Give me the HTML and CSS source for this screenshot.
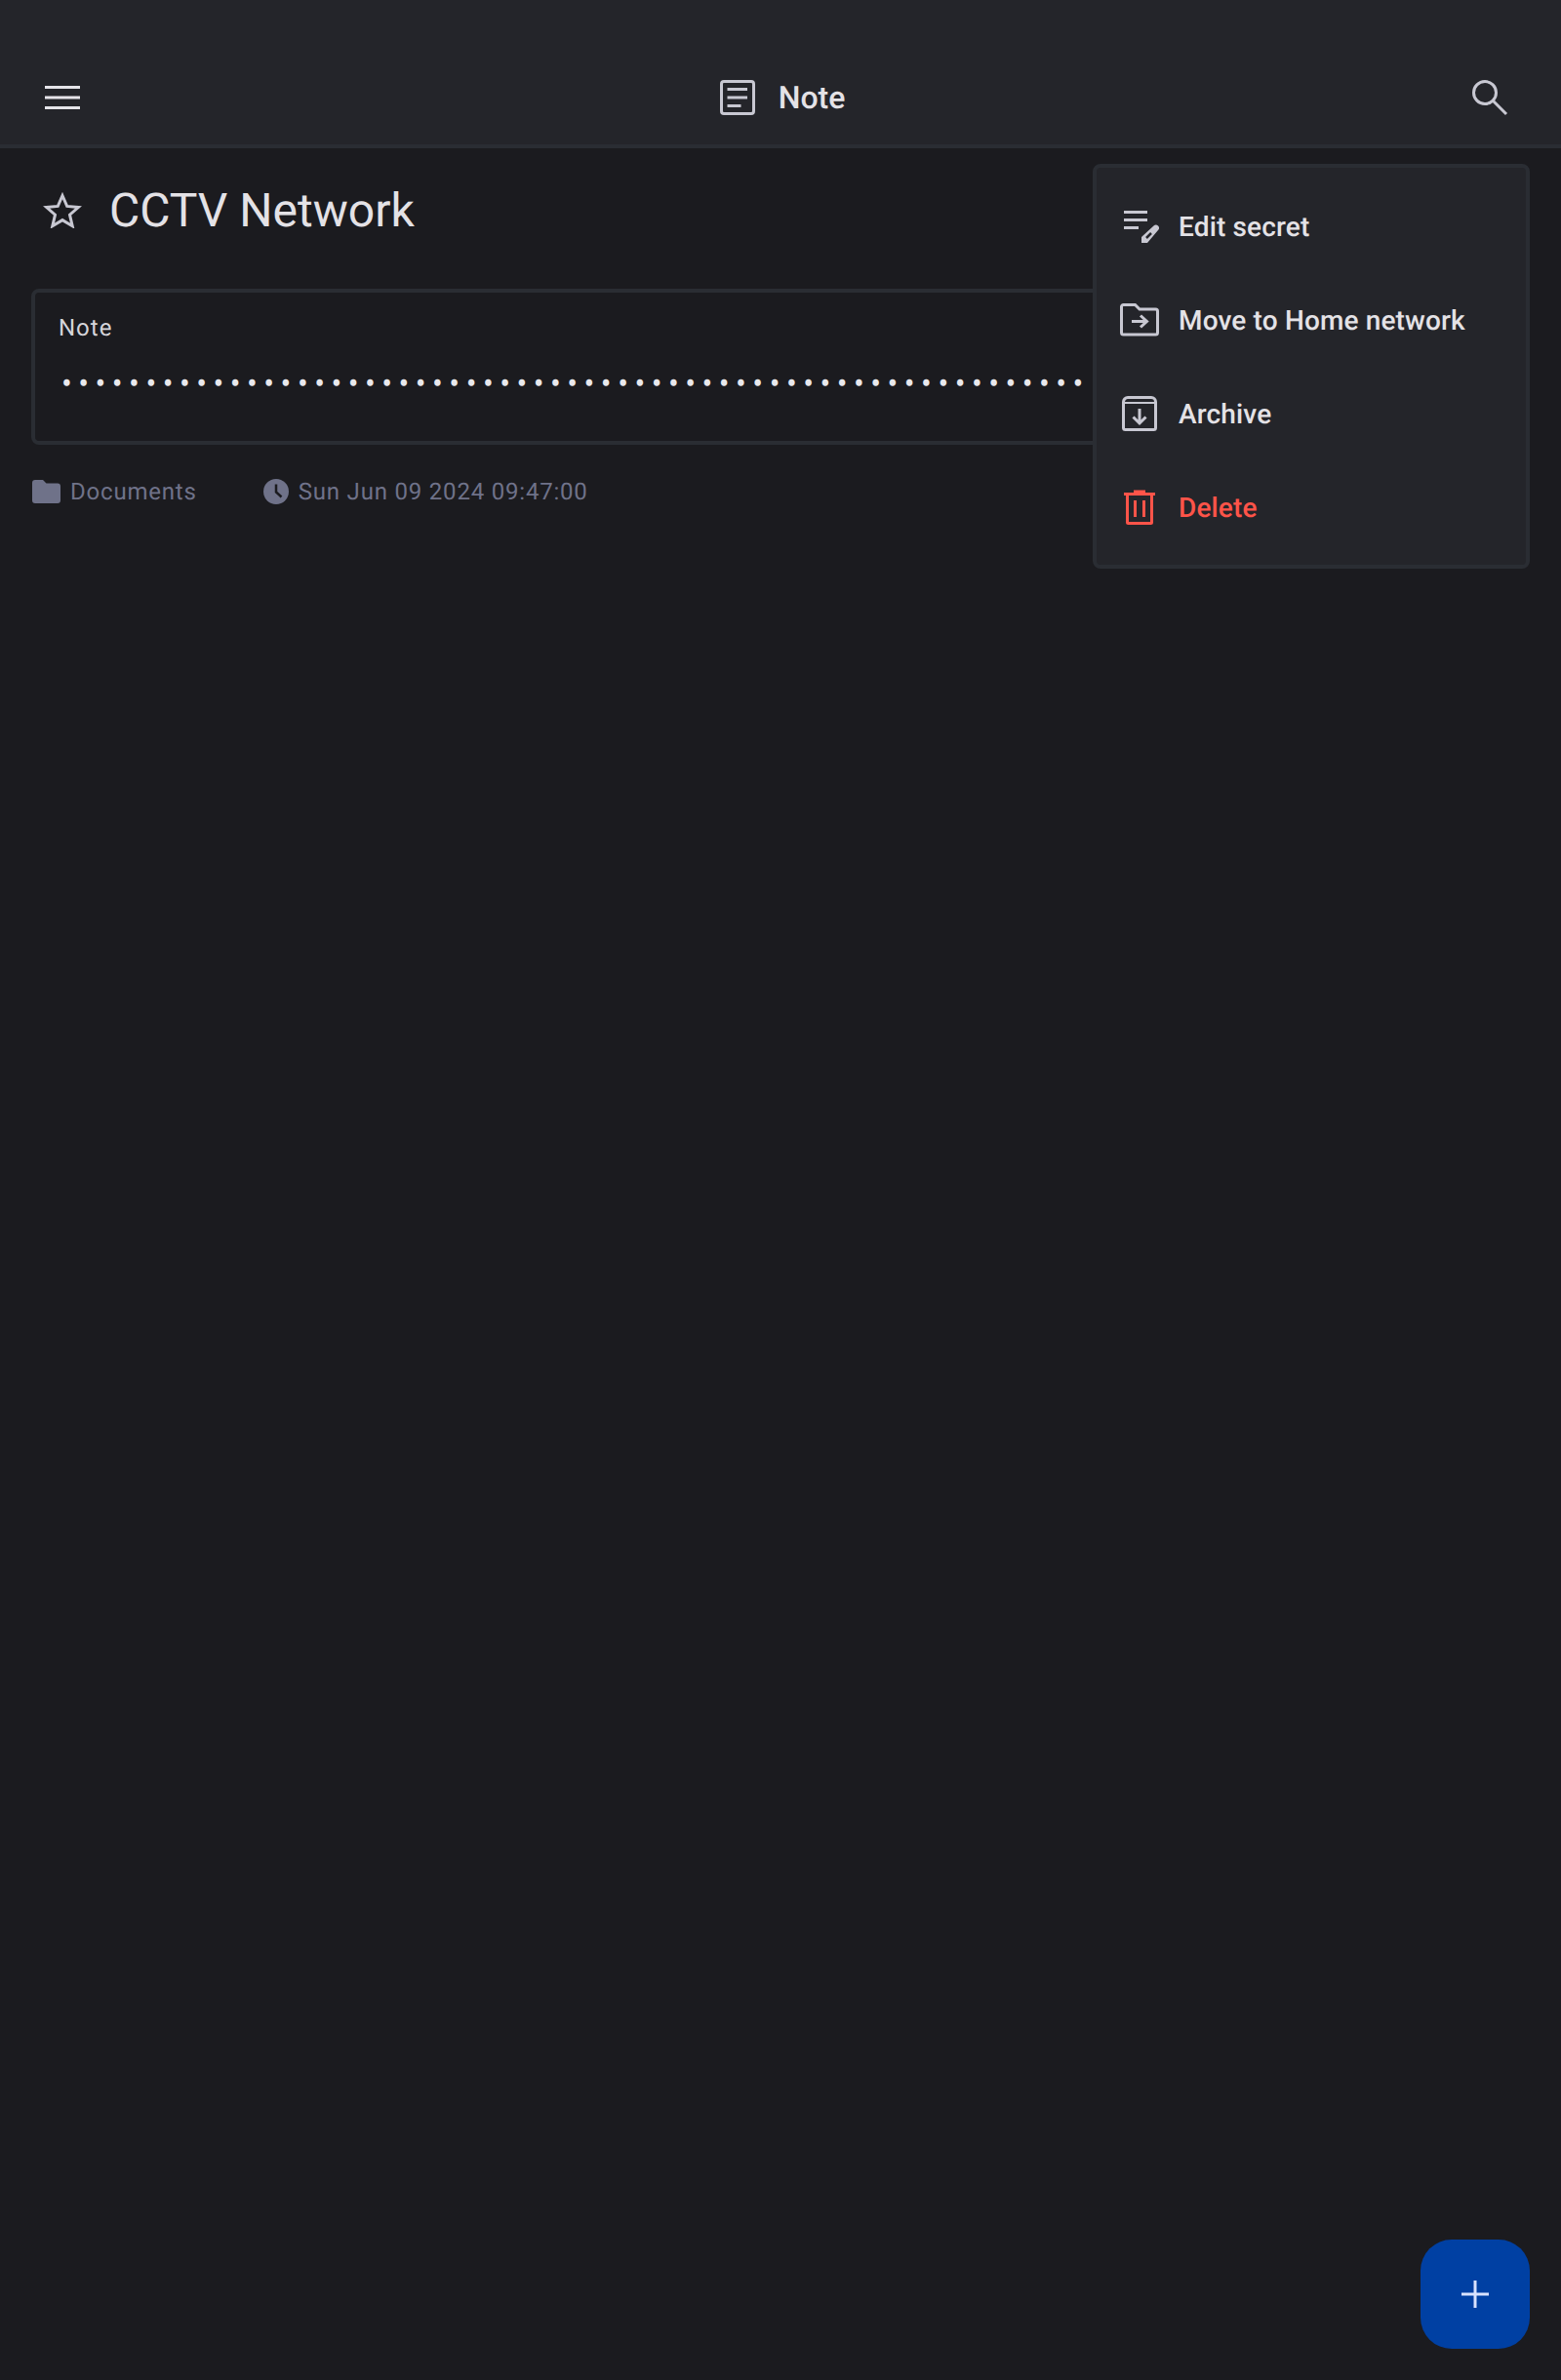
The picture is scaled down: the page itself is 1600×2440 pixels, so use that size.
FILE: index.html
```html
<!DOCTYPE html>
<html lang="en">
<head>
<meta charset="utf-8">
<title>Note</title>
<link rel="stylesheet" href="styles.css">
</head>
<body>
<div class="app">
  <header class="topbar">
    <svg class="icon-menu" width="36" height="24" viewBox="0 0 36 24"><path d="M0 1.500h36M0 12h36M0 22.500h36" fill="none" stroke="#e6e5ea" stroke-width="3"/></svg>
    <div class="topbar-title">
      <svg width="36" height="36" viewBox="0 0 36 36" fill="none" stroke="#c8c8d2" stroke-width="3"><rect x="1.500" y="1.500" width="33" height="33" rx="2.500"/><path d="M7.500 9.500h20.500M7.500 18h20.500M7.500 26.500h14"/></svg>
      <span>Note</span>
    </div>
    <svg width="38" height="38" viewBox="0 0 38 38" fill="none" stroke="#c8c8d2" stroke-width="3"><circle cx="14" cy="14" r="11.500"/><path d="M22.500 22.500L36 36"/></svg>
  </header>

  <main class="content">
    <div class="title-row">
      <svg class="icon-star" width="40" height="38" viewBox="0 0 40 38" fill="none" stroke="#c8c8d2" stroke-width="3"><path d="M20 4.500l4.700 10.900 11.800 1-9 7.800 2.700 11.500L20 29.600 9.800 35.700l2.700-11.500-9-7.800 11.800-1z"/></svg>
      <h1>CCTV Network</h1>
    </div>

    <section class="card">
      <div class="card-label">Note</div>
      <div class="card-dots">•••••••••••••••••••••••••••••••••••••••••••••••••••••••••••••</div>
    </section>

    <div class="meta">
      <span class="meta-item meta-folder">
        <svg width="29" height="24" viewBox="0 0 29 24" fill="#6f7289"><path d="M0 3A3 3 0 0 1 3 0h8l3.500 3.500h11.500a3 3 0 0 1 3 3v14.500a3 3 0 0 1-3 3H3a3 3 0 0 1-3-3z"/></svg>
        Documents
      </span>
      <span class="meta-item">
        <svg width="26" height="26" viewBox="0 0 26 26"><circle cx="13" cy="13" r="13" fill="#6f7289"/><path d="M13 5.500v8l5.500 5" fill="none" stroke="#1b1b1f" stroke-width="2.500"/></svg>
        Sun Jun 09 2024 09:47:00
      </span>
    </div>
  </main>

  <nav class="menu">
    <div class="menu-item">
      <span class="menu-icon">
        <svg width="40" height="33" viewBox="0 0 40 33" fill="none"><path d="M4 1.500h24M4 9.500h24M4 17.500h15" stroke="#c8c8d2" stroke-width="3"/><path d="M22 33v-6l12.500-11.500a3 3 0 0 1 4.500 4.500L28 33z" fill="#c8c8d2"/><path d="M27 28l5-5" stroke="#24252a" stroke-width="2.500"/></svg>
      </span>
      Edit secret
    </div>
    <div class="menu-item">
      <span class="menu-icon">
        <svg width="40" height="34" viewBox="0 0 40 34" fill="none" stroke="#c8c8d2" stroke-width="3"><path d="M1.500 3.500a2 2 0 0 1 2-2h12l4.500 4.500h16.500a2 2 0 0 1 2 2v22a2 2 0 0 1-2 2h-33a2 2 0 0 1-2-2z"/><path d="M12 18.500h15M21 12.500l6.500 6-6.500 6"/></svg>
      </span>
      Move to Home network
    </div>
    <div class="menu-item">
      <span class="menu-icon">
        <svg width="36" height="36" viewBox="0 0 36 36" fill="none" stroke="#c8c8d2" stroke-width="3"><path d="M1.500 6v26.500a2 2 0 0 0 2 2h29a2 2 0 0 0 2-2V6a4.500 4.500 0 0 0-4.500-4.500H6A4.500 4.500 0 0 0 1.500 6zM18 13v14.500M11.500 21.500l6.500 6.500 6.500-6.500"/><path d="M1.500 7h33" stroke-width="2"/></svg>
      </span>
      Archive
    </div>
    <div class="menu-item menu-item-danger">
      <span class="menu-icon">
        <svg width="32" height="36" viewBox="0 0 32 36" fill="none" stroke="#ff5449" stroke-width="3"><path d="M0 4.500h32M10 2h12M3.500 4.500v29a1 1 0 0 0 1 1h23a1 1 0 0 0 1-1v-29M11.500 11v17M20.500 11v17"/></svg>
      </span>
      Delete
    </div>
  </nav>

  <button class="fab" type="button" aria-label="Add">
    <svg width="28" height="28" viewBox="0 0 28 28"><path d="M14 0v28M0 14h28" stroke="#d8e2ff" stroke-width="3"/></svg>
  </button>
</div>
</body>
</html>
```

FILE: styles.css
```css
* { box-sizing: border-box; }

html, body {
  margin: 0;
  height: 100%;
  background: #1b1b1f;
}

body {
  font-family: Roboto, "Liberation Sans", sans-serif;
  color: #e4e2e6;
  text-rendering: geometricPrecision;
}

.app {
  position: relative;
  width: 1600px;
  height: 2440px;
  overflow: hidden;
}

.topbar {
  height: 152px;
  padding: 52px 54px 0 46px;
  display: flex;
  align-items: center;
  justify-content: space-between;
  background: #24252a;
  border-bottom: 4px solid #2a2d33;
}

.topbar-title {
  display: flex;
  align-items: center;
  gap: 24px;
  font-size: 32px;
  font-weight: 500;
}

.icon-menu {
  display: block;
  margin-right: 14px;
}

.content { padding: 0 32px; }

.title-row {
  height: 144px;
  padding: 0 0 16px 12px;
  display: flex;
  align-items: center;
  gap: 28px;
}

.icon-star { margin-top: -3px; }

.title-row h1 {
  margin: 0;
  font-size: 48px;
  font-weight: 400;
  line-height: 56px;
}

.card {
  height: 160px;
  padding: 20px 24px;
  border: 4px solid #2a2d33;
  border-radius: 8px;
  overflow: hidden;
}

.card-label {
  font-size: 24px;
  line-height: 32px;
  letter-spacing: 1px;
  color: #d6d5da;
}

.card-dots {
  margin-top: 23px;
  padding-left: 3px;
  font-size: 32px;
  line-height: 36px;
  letter-spacing: 6.480px;
  white-space: nowrap;
  color: #e9e8ec;
}

.meta {
  margin-top: 32px;
  padding-left: 1px;
  display: flex;
  align-items: center;
  gap: 68px;
  font-size: 24px;
  line-height: 32px;
  letter-spacing: 0.800px;
  color: #6f7289;
}

.meta-item {
  display: flex;
  align-items: center;
  gap: 10px;
}

.menu {
  position: absolute;
  top: 168px;
  left: 1120px;
  width: 448px;
  height: 415px;
  padding: 12px 0;
  background: #24252a;
  border: 4px solid #2a2d33;
  border-radius: 8px;
}

.menu-item {
  height: 96px;
  padding-left: 24px;
  display: flex;
  align-items: center;
  gap: 20px;
  font-size: 28px;
  font-weight: 500;
  letter-spacing: 0.150px;
}

.menu-item-danger { color: #ff5449; }

.menu-icon {
  width: 40px;
  display: flex;
  justify-content: center;
}

.fab {
  position: absolute;
  top: 2296px;
  left: 1456px;
  width: 112px;
  height: 112px;
  padding: 0;
  border: 0;
  border-radius: 32px;
  background: #0040a3;
  display: flex;
  align-items: center;
  justify-content: center;
}
```
